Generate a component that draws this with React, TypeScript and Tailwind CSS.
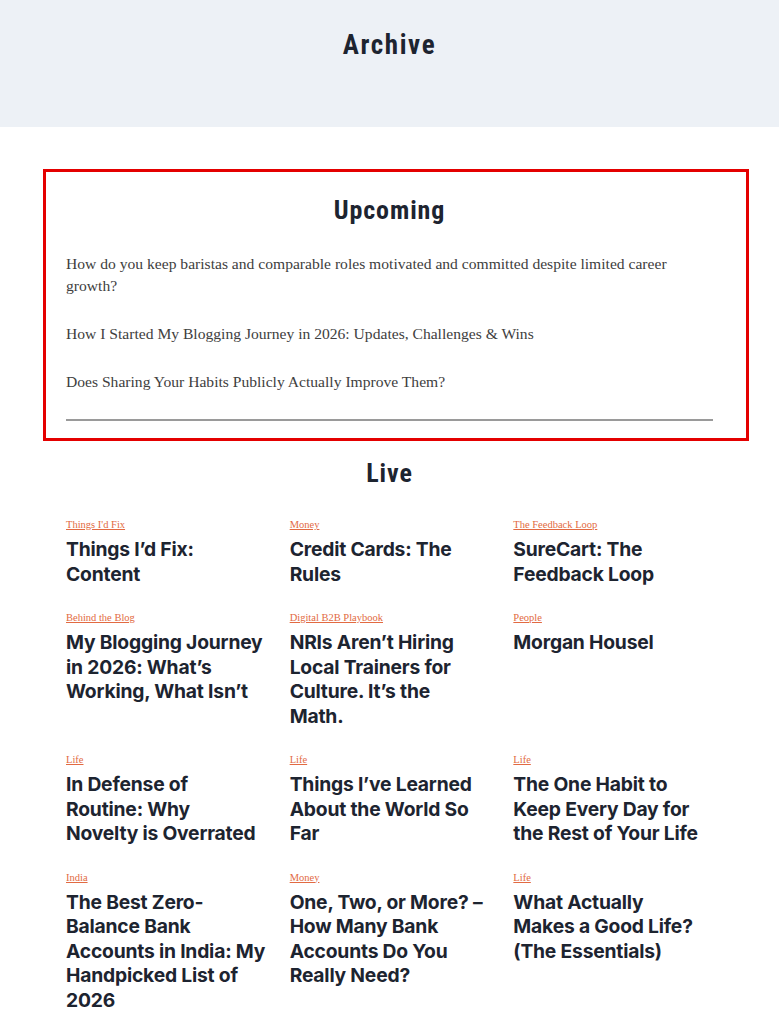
import React from 'react'

// Пост в сетке "Live"
interface Post {
  category: string
  title: string
}

const upcoming: string[] = [
  'How do you keep baristas and comparable roles motivated and committed despite limited career growth?',
  'How I Started My Blogging Journey in 2026: Updates, Challenges & Wins',
  'Does Sharing Your Habits Publicly Actually Improve Them?',
]

// Переносы строк заданы явно, как в макете
const posts: Post[] = [
  { category: "Things I'd Fix", title: 'Things I’d Fix:\nContent' },
  { category: 'Money', title: 'Credit Cards: The\nRules' },
  { category: 'The Feedback Loop', title: 'SureCart: The\nFeedback Loop' },
  { category: 'Behind the Blog', title: 'My Blogging Journey\nin 2026: What’s\nWorking, What Isn’t' },
  { category: 'Digital B2B Playbook', title: 'NRIs Aren’t Hiring\nLocal Trainers for\nCulture. It’s the\nMath.' },
  { category: 'People', title: 'Morgan Housel' },
  { category: 'Life', title: 'In Defense of\nRoutine: Why\nNovelty is Overrated' },
  { category: 'Life', title: 'Things I’ve Learned\nAbout the World So\nFar' },
  { category: 'Life', title: 'The One Habit to\nKeep Every Day for\nthe Rest of Your Life' },
  { category: 'India', title: 'The Best Zero-\nBalance Bank\nAccounts in India: My\nHandpicked List of\n2026' },
  { category: 'Money', title: 'One, Two, or More? –\nHow Many Bank\nAccounts Do You\nReally Need?' },
  { category: 'Life', title: 'What Actually\nMakes a Good Life?\n(The Essentials)' },
]

const heading = "font-['Liberation_Sans_Narrow','Roboto_Condensed','Roboto',sans-serif] font-bold text-[#1d2430] text-center"
const serif = "font-['Liberation_Serif','DejaVu_Serif',serif]"

export default function App() {
  return (
    <div className="min-h-screen bg-white">
      {/* Шапка */}
      <header className="h-[127px] bg-[#edf1f6] pt-[28px]">
        <h1 className={`${heading} text-[27px] leading-[34px] tracking-[1.6px]`}>Archive</h1>
      </header>

      <main className="pl-[43px] pr-[30px] pt-[42px]">
        {/* Предстоящие посты */}
        <section className="border-[3px] border-[#e40000] pl-[20px] pr-[33px] pt-[24px] pb-[17px]">
          <h2 className={`${heading} text-[26px] leading-[28px] tracking-[0.9px]`}>Upcoming</h2>
          <ul className={`${serif} mt-[29px] space-y-[26px] text-[15.6px] leading-[22px] text-[#404040]`}>
            {upcoming.map((item) => (
              <li key={item}>{item}</li>
            ))}
          </ul>
          <hr className="mt-[26px] border-t-2 border-[#9a9a9a]" />
        </section>

        {/* Опубликованные посты */}
        <div className="pl-[23px] pr-[36px]">
          <h2 className={`${heading} mt-[18px] text-[26px] leading-[28px] tracking-[0.9px]`}>Live</h2>
          <div className="mt-[31px] grid grid-cols-3 gap-x-[24px] gap-y-[25px]">
            {posts.map((post) => (
              <article key={post.title}>
                <a href="#" className={`${serif} block text-[10.5px] leading-[14px] text-[#e26a42] underline`}>
                  {post.category}
                </a>
                <h3 className="mt-[5px] whitespace-pre font-['Inter',sans-serif] text-[19.3px] font-bold leading-[24.5px] tracking-[-0.2px] text-[#1d2430]">
                  {post.title}
                </h3>
              </article>
            ))}
          </div>
        </div>
      </main>
    </div>
  )
}
